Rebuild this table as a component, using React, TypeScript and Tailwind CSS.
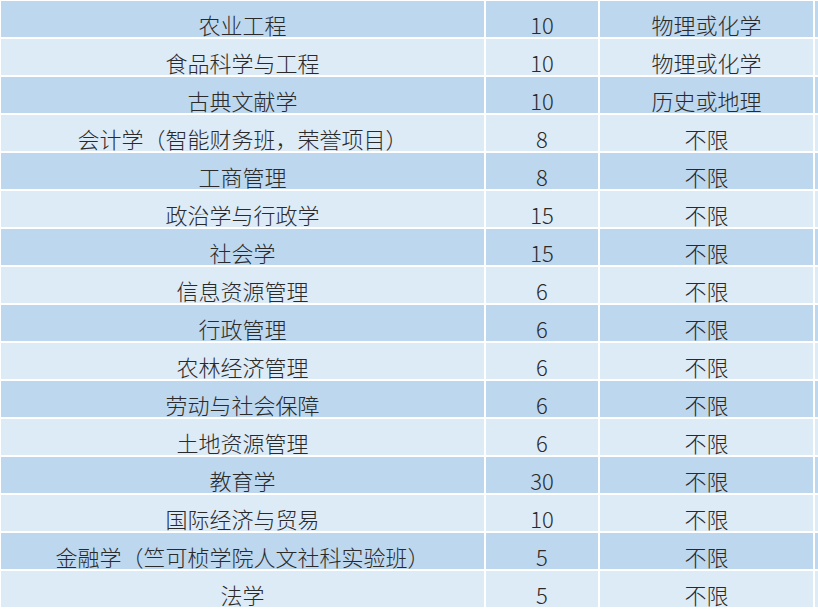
const rows: [string, string, string][] = [
  ["农业工程", "10", "物理或化学"],
  ["食品科学与工程", "10", "物理或化学"],
  ["古典文献学", "10", "历史或地理"],
  ["会计学（智能财务班，荣誉项目）", "8", "不限"],
  ["工商管理", "8", "不限"],
  ["政治学与行政学", "15", "不限"],
  ["社会学", "15", "不限"],
  ["信息资源管理", "6", "不限"],
  ["行政管理", "6", "不限"],
  ["农林经济管理", "6", "不限"],
  ["劳动与社会保障", "6", "不限"],
  ["土地资源管理", "6", "不限"],
  ["教育学", "30", "不限"],
  ["国际经济与贸易", "10", "不限"],
  ["金融学（竺可桢学院人文社科实验班）", "5", "不限"],
  ["法学", "5", "不限"],
];

export default function App() {
  return (
    <div className="h-[610px] w-[818px] overflow-hidden bg-white pt-px pl-px font-['Noto_Sans_CJK_SC','Noto_Sans',sans-serif] text-[22px] text-[#2a2a2a]">
      <div className="grid grid-cols-[483px_112px_213px_1fr] gap-[2px]">
        {rows.map(([major, count, subject], i) => {
          const bg = i % 2 === 0 ? "bg-[#bdd7ee]" : "bg-[#ddebf7]";
          return [major, count, subject, ""].map((text, j) => (
            <div
              key={`${i}-${j}`}
              className={`flex h-[36px] items-end justify-center whitespace-nowrap pb-[1px] leading-none ${bg}`}
            >
              <span className="translate-y-[-1px] font-light">{text}</span>
            </div>
          ));
        })}
      </div>
    </div>
  );
}
